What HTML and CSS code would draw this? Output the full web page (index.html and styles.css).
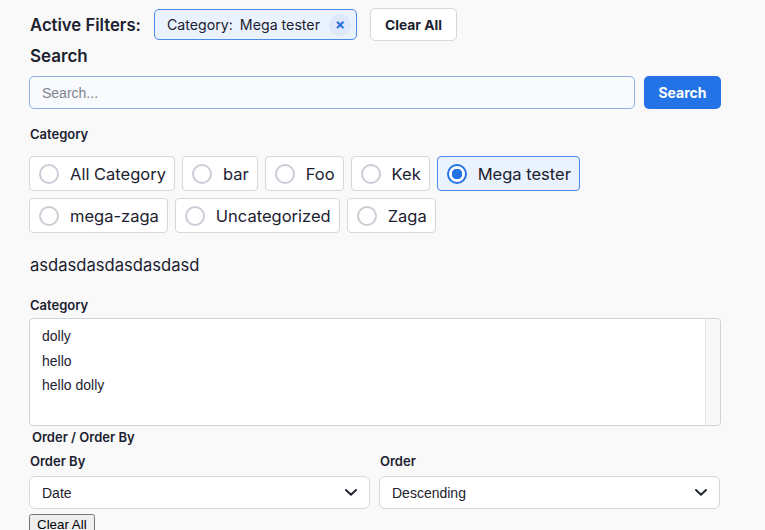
FILE: index.html
```html
<!DOCTYPE html>
<html lang="en">
<head>
<meta charset="utf-8">
<title>Filters</title>
<link rel="stylesheet" href="styles.css">
</head>
<body>
<div class="page">
  <div class="active-row">
    <span class="active-title">Active Filters:</span>
    <span class="chip">
      <span class="chip-key">Category:</span>
      <span class="chip-val">Mega tester</span>
      <span class="chip-close">&times;</span>
    </span>
    <button class="btn-outline" type="button">Clear All</button>
  </div>

  <h2 class="heading">Search</h2>
  <div class="search-row">
    <div class="search-input">Search...</div>
    <button class="btn-primary" type="button">Search</button>
  </div>

  <div class="label label-cat">Category</div>
  <div class="radios">
    <label class="radio"><span class="dot"></span><span class="radio-text">All Category</span></label>
    <label class="radio"><span class="dot"></span><span class="radio-text">bar</span></label>
    <label class="radio"><span class="dot"></span><span class="radio-text">Foo</span></label>
    <label class="radio"><span class="dot"></span><span class="radio-text">Kek</span></label>
    <label class="radio radio-on"><span class="dot dot-on"></span><span class="radio-text">Mega tester</span></label>
    <label class="radio"><span class="dot"></span><span class="radio-text">mega-zaga</span></label>
    <label class="radio"><span class="dot"></span><span class="radio-text">Uncategorized</span></label>
    <label class="radio"><span class="dot"></span><span class="radio-text">Zaga</span></label>
  </div>

  <p class="plain">asdasdasdasdasdasd</p>

  <div class="label label-cat2">Category</div>
  <div class="listbox">
    <div class="options">
      <div class="option">dolly</div>
      <div class="option">hello</div>
      <div class="option">hello dolly</div>
    </div>
    <div class="track"></div>
  </div>

  <div class="label legend">Order / Order By</div>
  <div class="order-grid">
    <div class="field">
      <div class="label">Order By</div>
      <div class="select">
        <span>Date</span>
        <svg class="chev" width="12" height="7" viewBox="0 0 12 7"><path d="M1 1 L6 5.8 L11 1" fill="none" stroke="#1f2430" stroke-width="1.9" stroke-linecap="round" stroke-linejoin="round"/></svg>
      </div>
    </div>
    <div class="field">
      <div class="label">Order</div>
      <div class="select">
        <span>Descending</span>
        <svg class="chev" width="12" height="7" viewBox="0 0 12 7"><path d="M1 1 L6 5.8 L11 1" fill="none" stroke="#1f2430" stroke-width="1.9" stroke-linecap="round" stroke-linejoin="round"/></svg>
      </div>
    </div>
  </div>
  <button class="native-btn" type="button">Clear All</button>
</div>
</body>
</html>
```

FILE: styles.css
```css
* { box-sizing: border-box; }
html, body { margin: 0; padding: 0; }
body {
  background: #f9f9f9;
  color: #1c2130;
  font-family: Inter, "Noto Sans", sans-serif;
  overflow: hidden;
}
.page {
  width: 692px;
  margin-left: 29px;
  padding-top: 8px;
}
.active-row {
  display: flex;
  align-items: center;
  height: 33px;
}
.active-title {
  font-size: 16.7px;
  font-weight: 600;
  margin-left: 1px;
  margin-right: 13px;
}
.chip {
  display: inline-flex;
  align-items: center;
  height: 31px;
  padding: 0 5px 0 12px;
  border: 1px solid #4b8aea;
  border-radius: 5px;
  background: #eaf2fe;
  font-size: 14.2px;
}
.chip-key { margin-right: 7px; }
.chip-close {
  margin-left: 9px;
  width: 22px;
  height: 22px;
  border-radius: 50%;
  background: #dde8fb;
  color: #2a6fe0;
  font-size: 15px;
  font-weight: 700;
  line-height: 22px;
  text-align: center;
}
.btn-outline {
  margin-left: 13px;
  height: 33px;
  padding: 0 14px;
  border: 1px solid #d3d7de;
  border-radius: 5px;
  background: #ffffff;
  color: #1c2130;
  font-family: Inter, sans-serif;
  font-size: 13.8px;
  font-weight: 700;
}
.heading {
  margin: 4px 0 0 1px;
  font-size: 17px;
  line-height: 22px;
  font-weight: 600;
}
.search-row {
  display: flex;
  gap: 9px;
  margin-top: 9px;
}
.search-input {
  flex: 1;
  height: 33px;
  display: flex;
  align-items: center;
  padding-left: 12px;
  border: 1px solid #8eb0e6;
  border-radius: 5px;
  background: #f8fafe;
  color: #7d8391;
  font-family: "Liberation Sans", Arial, sans-serif;
  font-size: 14px;
}
.btn-primary {
  width: 77px;
  height: 33px;
  border: none;
  border-radius: 5px;
  background: #2373e6;
  color: #ffffff;
  font-family: Inter, sans-serif;
  font-size: 14px;
  font-weight: 700;
}
.label {
  font-size: 13px;
  line-height: 18px;
  font-weight: 600;
  margin-left: 1px;
}
.label-cat { margin-top: 16px; }
.radios {
  display: flex;
  flex-wrap: wrap;
  gap: 7px;
  margin-top: 13px;
}
.radio {
  display: inline-flex;
  align-items: center;
  height: 35px;
  padding: 0 8px 0 9px;
  border: 1px solid #d3d7de;
  border-radius: 4px;
  background: #ffffff;
  font-size: 16.5px;
}
.radio-on {
  background: #eaf2fe;
  border-color: #4b8aea;
}
.dot {
  width: 20px;
  height: 20px;
  border-radius: 50%;
  border: 2px solid #c9cdd5;
  background: #ffffff;
  margin-right: 11px;
  flex: none;
}
.dot-on {
  border-color: #2373e6;
  background: radial-gradient(circle, #2373e6 0 5px, #ffffff 5.5px);
}
.plain {
  margin: 21px 0 0 1px;
  font-size: 16.6px;
  line-height: 22px;
}
.label-cat2 { margin-top: 20px; }
.listbox {
  display: flex;
  height: 108px;
  margin-top: 4px;
  border: 1px solid #cdd3dc;
  border-radius: 4px;
  background: #ffffff;
  overflow: hidden;
}
.options {
  flex: 1;
  padding: 5px 0 0 12px;
  font-family: "Liberation Sans", Arial, sans-serif;
  font-size: 14px;
}
.option { line-height: 24.6px; }
.track {
  width: 15px;
  background: #f8f8f8;
  border-left: 1px solid #e6e6e6;
}
.legend {
  margin-top: 2px;
  margin-left: 3px;
}
.order-grid {
  display: grid;
  grid-template-columns: 341px 341px;
  gap: 9px;
  margin-top: 6px;
}
.field .label { margin-bottom: 6px; }
.select {
  display: flex;
  align-items: center;
  justify-content: space-between;
  height: 33px;
  padding: 0 12px 0 12px;
  border: 1px solid #d3d7de;
  border-radius: 6px;
  background: #ffffff;
  font-family: "Liberation Sans", Arial, sans-serif;
  font-size: 14px;
}
.chev { display: block; }
.native-btn {
  display: block;
  margin-top: 5px;
  font-family: "Liberation Sans", Arial, sans-serif;
  font-size: 13.33px;
}
```
